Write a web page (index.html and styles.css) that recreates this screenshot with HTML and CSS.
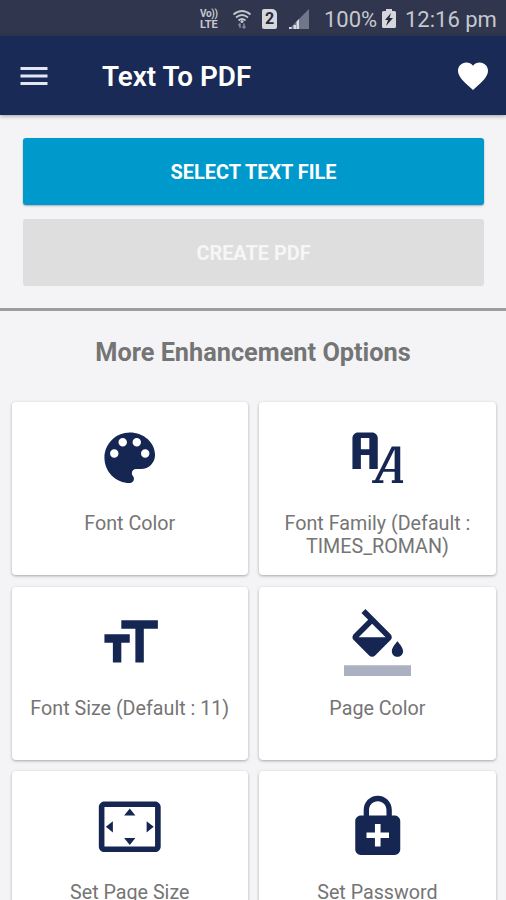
FILE: index.html
```html
<!DOCTYPE html>
<html lang="en">
<head>
<meta charset="utf-8">
<title>Text To PDF</title>
<link rel="stylesheet" href="styles.css">
</head>
<body>
<div class="status">
  <div class="volte"><span>Vo))</span><span>LTE</span></div>
  <svg class="wifi" width="20" height="20" viewBox="0 0 20 20" fill="none" stroke="#c3c6ce" stroke-width="1.8"><path d="M1.5 5.5Q10-1.5 18.500 5.500M4 8.500Q10 3.500 16 8.500M6.500 11.500Q10 8.500 13.500 11.500"/><circle cx="10" cy="12.500" r="1.500" fill="#c3c6ce" stroke="none"/><path stroke="#858b9b" stroke-width="1.500" d="M8 14.500v4.500M6.500 16.500 8 14.500M12 14.500V19M10.500 17.500 12 19l1.500-1.500"/></svg>
  <div class="sim">2</div>
  <svg class="signal" width="20" height="20" viewBox="0 0 20 20"><path fill="#70778a" d="M20 0v20H0z"/><path fill="#d9dbe0" d="M0 18h2.500v2H0zM4.500 16H7v4H4.500zM7.500 12.500 10 10v10H7.500z"/></svg>
  <span class="percent">100%</span>
  <svg class="battery" width="14" height="19" viewBox="0 0 14 19"><path fill="#d5d7dc" d="M4 0h6v2h2.500Q14 2 14 3.500v14q0 1.500-1.500 1.500h-11Q0 19 0 17.500v-14Q0 2 1.500 2H4z"/><path fill="#252a3d" d="M9 4 3 11h3l-2 6 7-8H7.500z"/></svg>
  <span class="clock">12:16 pm</span>
</div>
<header class="appbar">
  <svg class="menu" viewBox="0 0 24 24"><path d="M3 18h18v-2H3v2zm0-5h18v-2H3v2zm0-7v2h18V6H3z"/></svg>
  <h1>Text To PDF</h1>
  <svg class="heart" viewBox="0 0 24 24"><path d="M12 21.350l-1.450-1.320C5.400 15.360 2 12.280 2 8.500 2 5.420 4.420 3 7.500 3c1.740 0 3.410.81 4.500 2.090C13.090 3.810 14.760 3 16.500 3 19.580 3 22 5.420 22 8.500c0 3.780-3.400 6.860-8.550 11.540L12 21.350z"/></svg>
</header>
<section class="actions">
  <button class="btn primary">SELECT TEXT FILE</button>
  <button class="btn disabled">CREATE PDF</button>
</section>
<h2>More Enhancement Options</h2>
<main class="grid">
  <div class="card">
    <svg viewBox="0 0 24 24"><path d="M12 3c-4.970 0-9 4.030-9 9s4.030 9 9 9c.83 0 1.500-.67 1.500-1.500 0-.39-.15-.74-.39-1.010-.23-.26-.38-.61-.38-.99 0-.83.67-1.500 1.500-1.500H16c2.760 0 5-2.240 5-5 0-4.420-4.030-8-9-8zm-5.500 9c-.83 0-1.500-.67-1.500-1.500S5.670 9 6.500 9 8 9.670 8 10.500 7.330 12 6.500 12zm3-4C8.670 8 8 7.330 8 6.500S8.670 5 9.500 5s1.500.67 1.500 1.500S10.330 8 9.500 8zm5 0c-.83 0-1.500-.67-1.500-1.500S13.670 5 14.500 5s1.500.67 1.500 1.500S15.330 8 14.500 8zm3 4c-.83 0-1.500-.67-1.500-1.500S16.670 9 17.500 9s1.500.67 1.500 1.500-.67 1.500-1.500 1.500z"/></svg>
    <p>Font Color</p>
  </div>
  <div class="card">
    <svg viewBox="0 0 24 24"><path d="M17 8h3v12h1v1h-4v-1h1v-3h-4l-1.500 3H14v1h-4v-1h1l6-12m1 1l-3.500 7H18V9M5 3h5c1.110 0 2 .89 2 2v11H9v-5H6v5H3V5c0-1.110.89-2 2-2m1 2v4h3V5H6z"/></svg>
    <p>Font Family (Default :<br>TIMES_ROMAN)</p>
  </div>
  <div class="card">
    <svg viewBox="0 0 24 24"><path d="M9 4v3h5v12h3V7h5V4H9zm-6 8h3v7h3v-7h3V9H3v3z"/></svg>
    <p>Font Size (Default : 11)</p>
  </div>
  <div class="card">
    <svg viewBox="0 0 24 24"><path d="M16.560 8.940L7.620 0 6.210 1.410l2.380 2.380-5.150 5.150c-.59.59-.59 1.540 0 2.120l5.500 5.500c.29.29.68.44 1.060.44s.77-.15 1.060-.44l5.500-5.500c.59-.58.59-1.530 0-2.120zM5.210 10L10 5.210 14.790 10H5.210zM19 11.500s-2 2.170-2 3.500c0 1.100.9 2 2 2s2-.9 2-2c0-1.330-2-3.500-2-3.500z"/><path fill-opacity=".36" d="M0 20h24v4H0z"/></svg>
    <p>Page Color</p>
  </div>
  <div class="card">
    <svg viewBox="0 0 24 24"><path d="M12.010 5.500L10 8h4l-1.990-2.500zM18 10v4l2.500-1.990L18 10zM6 10l-2.500 2.010L6 14v-4zm8 6h-4l2.010 2.500L14 16zm7-13H3c-1.100 0-2 .9-2 2v14c0 1.100.9 2 2 2h18c1.100 0 2-.9 2-2V5c0-1.100-.9-2-2-2zm0 16.010H3V4.990h18v14.020z"/></svg>
    <p>Set Page Size</p>
  </div>
  <div class="card">
    <svg viewBox="0 0 24 24"><path d="M18 8h-1V6c0-2.760-2.240-5-5-5S7 3.240 7 6v2H6c-1.100 0-2 .9-2 2v10c0 1.100.9 2 2 2h12c1.100 0 2-.9 2-2V10c0-1.100-.9-2-2-2zM8.900 6c0-1.710 1.390-3.100 3.100-3.100s3.100 1.390 3.100 3.100v2H8.900V6zM16 16h-3v3h-2v-3H8v-2h3v-3h2v3h3v2z"/></svg>
    <p>Set Password</p>
  </div>
</main>
</body>
</html>
```
FILE: styles.css
```css
* { box-sizing: border-box; }
html, body { height: 900px; overflow: hidden; }
body { margin: 0; background: #f4f4f7; font-family: Roboto, "Liberation Sans", sans-serif; color: #757575; }
h1, h2, p { margin: 0; }
.status { height: 36px; background: #30364d; color: #c6c8cf; display: flex; align-items: center; padding: 1px 0 0 200px; font-size: 22px; white-space: nowrap; }
.status > * { flex: none; }
.volte { width: 20px; display: flex; flex-direction: column; font-size: 10px; font-weight: 700; line-height: 11px; }
.volte span:first-child { letter-spacing: -.3px; }
.volte span:last-child { font-size: 11px; }
.wifi { margin-left: 12px; }
.sim { margin-left: 10px; width: 15px; height: 20px; border-radius: 2px 5px 2px 2px; background: #d5d7dc; color: #252a3d; font-size: 16px; font-weight: 700; line-height: 20px; text-align: center; }
.signal { margin-left: 12px; }
.percent { margin-left: 15px; width: 53px; margin-top: 1px; }
.battery { margin-left: 5px; }
.clock { margin-left: 9px; margin-top: 1px; }
.appbar { height: 79px; background: #192a56; color: #fff; display: flex; align-items: center; padding: 0 15px 0 16px; position: relative; box-shadow: 0 1px 4px rgba(0,0,0,.35); }
.appbar svg { width: 36px; height: 36px; fill: #fff; flex: none; }
.appbar .menu { fill: #e4e7f2; }
.appbar h1 { flex: 1; margin-left: 50px; margin-top: 2px; font-size: 27.800px; font-weight: 600; line-height: 34px; }
.actions { height: 196px; padding: 22.500px 22px 0 23px; border-bottom: 3px solid #9d9d9f; display: flex; flex-direction: column; gap: 14.500px; }
.btn { height: 67px; border: 0; border-radius: 3px; padding: 2px 0 0; font: 700 19.900px Roboto, "Liberation Sans", sans-serif; color: #fff; }
.primary { background: #0099cc; box-shadow: 0 1px 2px rgba(0,0,0,.3); }
.disabled { background: #dedede; color: #f6f6f6; }
h2 { height: 91px; padding-top: 27px; text-align: center; font-size: 25.300px; font-weight: 700; line-height: 30px; }
.grid { display: grid; grid-template-columns: 236.500px 236.500px; gap: 11.600px 11.200px; padding-left: 11.500px; }
.card { height: 173px; background: #fff; border-radius: 4px; box-shadow: 0 1px 3px rgba(0,0,0,.32); display: flex; flex-direction: column; align-items: center; padding-top: 22px; }
.card svg { width: 67.500px; height: 67.500px; fill: #162653; flex: none; }
.card p { margin-top: 21.500px; font-size: 19.700px; line-height: 22.500px; text-align: center; white-space: nowrap; }
```
